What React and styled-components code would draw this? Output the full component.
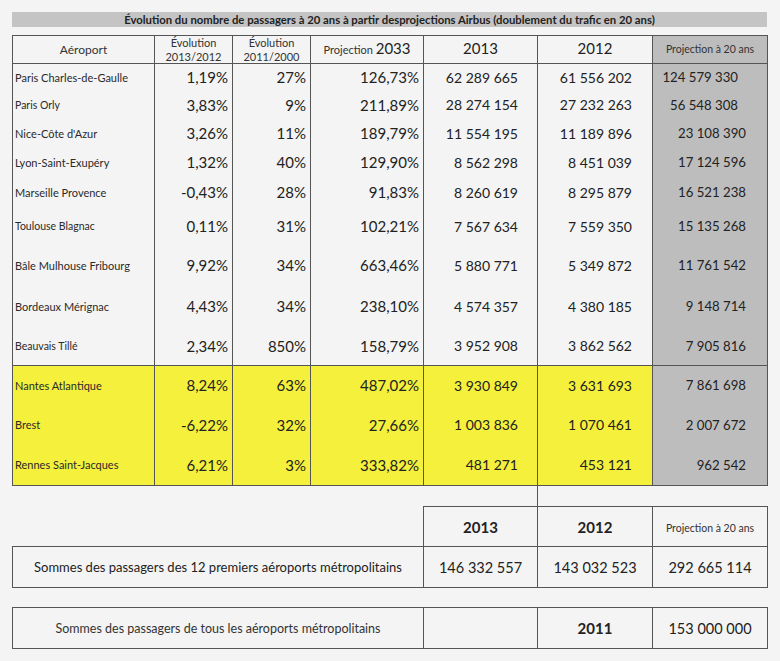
import React from 'react';
import styled, { createGlobalStyle } from 'styled-components';

const rows = [
  { name: 'Paris Charles-de-Gaulle', a: '1,19%', b: '27%', c: '126,73%', d: '62 289 665', e: '61 556 202', f: '124 579 330', h: 27, fs: 11, fpad: 29 },
  { name: 'Paris Orly', a: '3,83%', b: '9%', c: '211,89%', d: '28 274 154', e: '27 232 263', f: '56 548 308', h: 28, fs: 10.5, fpad: 29 },
  { name: "Nice-Côte d'Azur", a: '3,26%', b: '11%', c: '189,79%', d: '11 554 195', e: '11 189 896', f: '23 108 390', h: 29, fs: 11 },
  { name: 'Lyon-Saint-Exupéry', a: '1,32%', b: '40%', c: '129,90%', d: '8 562 298', e: '8 451 039', f: '17 124 596', h: 29, fs: 11 },
  { name: 'Marseille Provence', a: '-0,43%', b: '28%', c: '91,83%', d: '8 260 619', e: '8 295 879', f: '16 521 238', h: 31, fs: 11 },
  { name: 'Toulouse Blagnac', a: '0,11%', b: '31%', c: '102,21%', d: '7 567 634', e: '7 559 350', f: '15 135 268', h: 37, fs: 10.5 },
  { name: 'Bâle Mulhouse Fribourg', a: '9,92%', b: '34%', c: '663,46%', d: '5 880 771', e: '5 349 872', f: '11 761 542', h: 41, fs: 11 },
  { name: 'Bordeaux Mérignac', a: '4,43%', b: '34%', c: '238,10%', d: '4 574 357', e: '4 380 185', f: '9 148 714', h: 41, fs: 11 },
  { name: 'Beauvais Tillé', a: '2,34%', b: '850%', c: '158,79%', d: '3 952 908', e: '3 862 562', f: '7 905 816', h: 39, fs: 10.5 },
  { name: 'Nantes Atlantique', a: '8,24%', b: '63%', c: '487,02%', d: '3 930 849', e: '3 631 693', f: '7 861 698', h: 39, fs: 11, hl: true },
  { name: 'Brest', a: '-6,22%', b: '32%', c: '27,66%', d: '1 003 836', e: '1 070 461', f: '2 007 672', h: 40, fs: 11, hl: true },
  { name: 'Rennes Saint-Jacques', a: '6,21%', b: '3%', c: '333,82%', d: '481 271', e: '453 121', f: '962 542', h: 41, fs: 11, hl: true },
];

function App() {
  return (
    <>
      <GlobalStyle />
      <Page>
        <TitleBar>Évolution du nombre de passagers à 20 ans à partir desprojections Airbus (doublement du trafic en 20 ans)</TitleBar>

        <MainTable>
          <colgroup>
            <col style={{ width: 142 }} />
            <col style={{ width: 78 }} />
            <col style={{ width: 78 }} />
            <col style={{ width: 113 }} />
            <col style={{ width: 114 }} />
            <col style={{ width: 115 }} />
            <col style={{ width: 115 }} />
          </colgroup>
          <thead>
            <HeadRow>
              <Th><Small size={12}>Aéroport</Small></Th>
              <Th><Small size={11}>Évolution<br />2013/2012</Small></Th>
              <Th><Small size={11}>Évolution<br />2011/2000</Small></Th>
              <Th><Small size={11}>Projection</Small> <Big>2033</Big></Th>
              <Th><Big>2013</Big></Th>
              <Th><Big>2012</Big></Th>
              <Th $gray><Small size={10.5}>Projection à 20 ans</Small></Th>
            </HeadRow>
          </thead>
          <tbody>
            {rows.map((r, i) => (
              <BodyRow key={r.name} $h={r.h} $hl={r.hl} $first={i === 9}>
                <NameCell $fs={r.fs}>{r.name}</NameCell>
                <PctCell>{r.a}</PctCell>
                <PctCell>{r.b}</PctCell>
                <PctCell>{r.c}</PctCell>
                <NumCell $pad={19}>{r.d}</NumCell>
                <NumCell $pad={20}>{r.e}</NumCell>
                <NumCell $pad={r.fpad || 21} $gray>{r.f}</NumCell>
              </BodyRow>
            ))}
          </tbody>
        </MainTable>

        <Connector />

        <SumTable>
          <colgroup>
            <col style={{ width: 411 }} />
            <col style={{ width: 114 }} />
            <col style={{ width: 115 }} />
            <col style={{ width: 115 }} />
          </colgroup>
          <tbody>
            <SumRow $h={40}>
              <SumCell $empty />
              <SumCell><Bold>2013</Bold></SumCell>
              <SumCell><Bold>2012</Bold></SumCell>
              <SumCell><Small size={10.5}>Projection à 20 ans</Small></SumCell>
            </SumRow>
            <SumRow $h={41}>
              <LabelCell>Sommes des passagers des 12 premiers aéroports métropolitains</LabelCell>
              <SumCell>146 332 557</SumCell>
              <SumCell>143 032 523</SumCell>
              <SumCell>292 665 114</SumCell>
            </SumRow>
          </tbody>
        </SumTable>

        <SumTable $gap={19}>
          <colgroup>
            <col style={{ width: 411 }} />
            <col style={{ width: 114 }} />
            <col style={{ width: 115 }} />
            <col style={{ width: 115 }} />
          </colgroup>
          <tbody>
            <SumRow $h={41}>
              <LabelCell $light>Sommes des passagers de tous les aéroports métropolitains</LabelCell>
              <SumCell />
              <SumCell><Bold>2011</Bold></SumCell>
              <SumCell>153 000 000</SumCell>
            </SumRow>
          </tbody>
        </SumTable>
      </Page>
    </>
  );
}

export default App;

const GlobalStyle = createGlobalStyle`
  body {
    margin: 0;
    background: #f4f4f4;
    font-family: Lato, "Liberation Sans", sans-serif;
    color: #222;
  }
`

const Page = styled.div`
  width: 780px;
  height: 661px;
  padding: 12px 0 0 12px;
  box-sizing: border-box;
  display: flex;
  flex-direction: column;
  align-items: flex-start;
`

const TitleBar = styled.div`
  width: 755px;
  height: 15px;
  background: #c4c4c4;
  font-size: 11.3px;
  font-weight: 700;
  line-height: 15px;
  text-align: center;
  color: #222;
  white-space: nowrap;
`

const MainTable = styled.table`
  margin-top: 8px;
  width: 755px;
  table-layout: fixed;
  border-collapse: collapse;
  border: 1.5px solid #555;
`

const HeadRow = styled.tr`
  height: 28px;
`

const Th = styled.th`
  border: 1px solid #555;
  border-bottom-width: 1.5px;
  font-size: 11px;
  font-weight: 400;
  text-align: center;
  padding: 0;
  line-height: 13.5px;
  background: ${p => (p.$gray ? '#bdbdbd' : 'transparent')};
  white-space: nowrap;
`

const Small = styled.span`
  font-size: ${p => p.size}px;
  color: #333;
`

const Big = styled.span`
  font-size: 15px;
`

const Bold = styled.span`
  font-size: 15px;
  font-weight: 700;
`

const BodyRow = styled.tr`
  height: ${p => p.$h}px;
  background: ${p => (p.$hl ? '#f4f03c' : 'transparent')};
  border-top: ${p => (p.$first ? '1.5px solid #555' : 'none')};
`

const Cell = styled.td`
  border-left: 1px solid #555;
  border-right: 1px solid #555;
  padding: 0;
  white-space: nowrap;
`

const NameCell = styled(Cell)`
  font-size: ${p => p.$fs}px;
  padding-left: 2px;
  color: #2a2a2a;
`

const PctCell = styled(Cell)`
  font-size: 15px;
  text-align: right;
  padding-right: 4px;
`

const NumCell = styled(Cell)`
  font-size: ${p => (p.$gray ? 13.2 : 14)}px;
  text-align: right;
  padding-right: ${p => p.$pad}px;
  background: ${p => (p.$gray ? '#bdbdbd' : 'transparent')};
`

const Connector = styled.div`
  width: 1px;
  height: 20px;
  margin-left: 525px;
  background: #555;
`

const SumTable = styled.table`
  margin-top: ${p => p.$gap || 0}px;
  width: 755px;
  table-layout: fixed;
  border-collapse: collapse;
`

const SumRow = styled.tr`
  height: ${p => p.$h}px;
`

const SumCell = styled.td`
  border: ${p => (p.$empty ? 'none' : '1px solid #555')};
  padding: 0;
  text-align: center;
  font-size: 14.5px;
  white-space: nowrap;
`

const LabelCell = styled(SumCell)`
  font-size: ${p => (p.$light ? 12.5 : 13)}px;
  color: ${p => (p.$light ? '#333' : '#222')};
`
